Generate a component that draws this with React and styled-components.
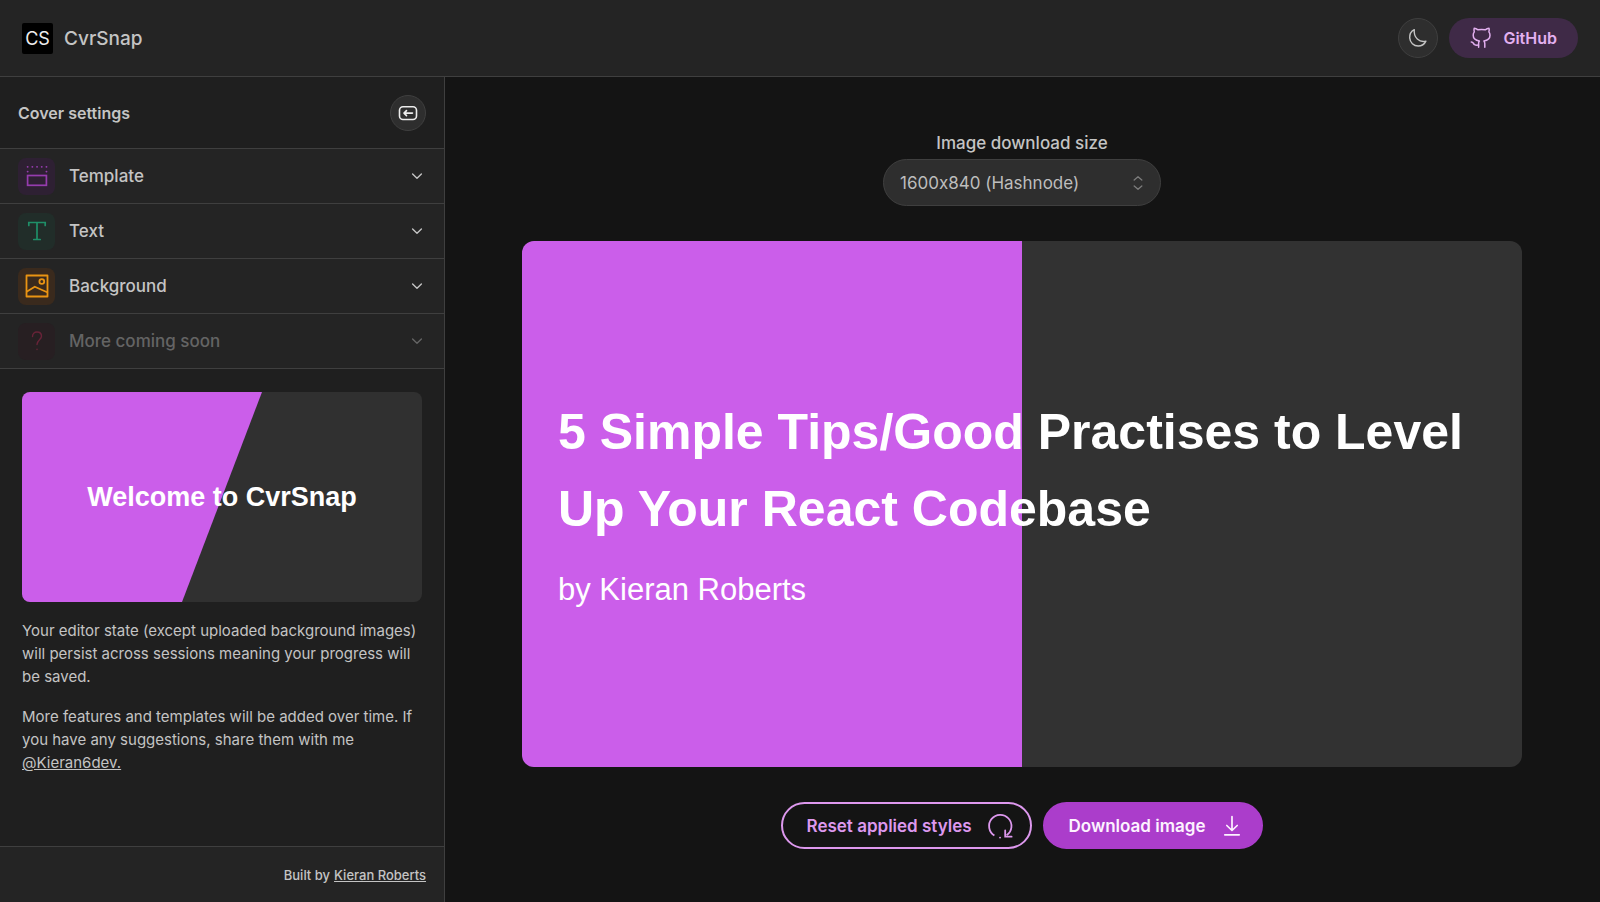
import React from "react";
import styled, { createGlobalStyle, ThemeProvider } from "styled-components";

const theme = {
  main: "#141414",
  side: "#1f1f1f",
  bar: "#242424",
  line: "#3f3f3f",
  text: "#c4c4c4",
  accent: "#cb5eea",
  accentSoft: "#dd98ee",
  accentStrong: "#ab3dcb",
};

const GlobalStyle = createGlobalStyle`
  *, *::before, *::after { box-sizing: border-box; }
  body {
    margin: 0;
    background: ${theme.main};
    color: ${theme.text};
    font-family: Inter, "Liberation Sans", sans-serif;
    font-size: 16px;
    font-feature-settings: "calt" 0;
  }
  h1, h2, p { margin: 0; }
  a { color: inherit; }
  button, select { font: inherit; font-feature-settings: inherit; cursor: pointer; }
  svg { display: block; flex: none; }
`;

const Page = styled.div`
  min-height: 100vh;
  display: flex;
  flex-direction: column;
`;

const Header = styled.header`
  height: 77px;
  padding: 0 22px;
  display: flex;
  align-items: center;
  justify-content: space-between;
  background: ${(p) => p.theme.bar};
  border-bottom: 1px solid ${(p) => p.theme.line};
`;

const Brand = styled.a`
  display: flex;
  align-items: center;
  gap: 11px;
  font-size: 19px;
  font-weight: 500;
  text-decoration: none;
`;

const Logo = styled.span`
  width: 31px;
  height: 31px;
  border-radius: 2px;
  background: #000;
  color: #eee;
  font-size: 18px;
  font-weight: 400;
  display: grid;
  place-items: center;
`;

const Actions = styled.div`
  display: flex;
  align-items: center;
  gap: 11px;
`;

const RoundButton = styled.button`
  width: ${(p) => p.$size}px;
  height: ${(p) => p.$size}px;
  padding: 0;
  border: 1px solid ${(p) => p.theme.line};
  border-radius: 50%;
  background: #2e2e2e;
  color: ${(p) => p.$color};
  display: grid;
  place-items: center;
`;

const GitHubLink = styled.a`
  height: 40px;
  padding: 0 21px;
  border-radius: 20px;
  background: #3f2a47;
  color: #e3b0f0;
  font-weight: 600;
  text-decoration: none;
  display: flex;
  align-items: center;
  gap: 9px;
`;

const Body = styled.div`
  flex: 1;
  display: flex;
`;

const Sidebar = styled.aside`
  width: 445px;
  flex: none;
  display: flex;
  flex-direction: column;
  background: ${(p) => p.theme.side};
  border-right: 1px solid ${(p) => p.theme.line};
`;

const SidebarHead = styled.div`
  height: 72px;
  padding: 0 18px;
  display: flex;
  align-items: center;
  justify-content: space-between;
  border-bottom: 1px solid ${(p) => p.theme.line};
`;

const SidebarTitle = styled.h2`
  font-size: 16px;
  font-weight: 600;
`;

const SectionButton = styled.button`
  width: 100%;
  height: 55px;
  padding: 0 20px 0 18px;
  border: 0;
  border-bottom: 1px solid ${(p) => p.theme.line};
  background: ${(p) => p.theme.bar};
  color: ${(p) => p.theme.text};
  font-size: 17px;
  font-weight: 500;
  text-align: left;
  display: flex;
  align-items: center;
  gap: 14px;

  &:disabled { cursor: default; color: #646464; }
`;

const SectionIcon = styled.span`
  width: 37px;
  height: 37px;
  border-radius: 8px;
  background: ${(p) => p.$bg};
  color: ${(p) => p.$color};
  display: grid;
  place-items: center;
`;

const SectionName = styled.span`
  flex: 1;
`;

const Intro = styled.div`
  flex: 1;
  padding: 23px 22px;
  display: flex;
  flex-direction: column;
  gap: 17px;
  font-size: 15px;
  line-height: 23px;
`;

const Welcome = styled.div`
  position: relative;
  isolation: isolate;
  aspect-ratio: 1600 / 840;
  border-radius: 8px;
  overflow: hidden;
  background: #303030;
  color: #fff;
  font-family: "Liberation Sans", Arial, sans-serif;
  font-size: 27px;
  font-weight: 700;
  display: grid;
  place-items: center;

  &::before {
    content: "";
    position: absolute;
    inset: 0;
    z-index: -1;
    background: ${(p) => p.theme.accent};
    clip-path: polygon(0 0, 60% 0, 40% 100%, 0 100%);
  }
`;

const SidebarFoot = styled.footer`
  height: 56px;
  padding: 0 18px;
  display: flex;
  align-items: center;
  justify-content: flex-end;
  gap: 4px;
  font-size: 13px;
  font-weight: 500;
  background: ${(p) => p.theme.bar};
  border-top: 1px solid ${(p) => p.theme.line};
`;

const Editor = styled.main`
  flex: 1;
  min-width: 0;
  padding: 55px 41px 40px 40px;
  display: flex;
  flex-direction: column;
  align-items: center;
  gap: 35px;
`;

const SizeField = styled.div`
  display: flex;
  flex-direction: column;
  align-items: center;
  gap: 4px;
`;

const SizeLabel = styled.label`
  font-size: 17px;
  font-weight: 500;
  line-height: 23px;
`;

const SelectBox = styled.div`
  width: 278px;
  display: grid;
  align-items: center;

  > * { grid-area: 1 / 1; }
  > svg { justify-self: end; margin-right: 16px; pointer-events: none; color: #7c7c7c; }
`;

const Select = styled.select`
  appearance: none;
  width: 100%;
  height: 47px;
  padding: 0 40px 0 16px;
  border: 1px solid #3f3f3f;
  border-radius: 24px;
  background: #2e2e2e;
  color: #bdbdbd;
  font-size: 17px;
`;

const Cover = styled.section`
  width: 100%;
  max-width: 1000px;
  aspect-ratio: 1000 / 526;
  padding: 0 36px;
  border-radius: 12px;
  background: linear-gradient(90deg, ${(p) => p.theme.accent} 50%, #323232 50%);
  color: #fff;
  font-family: "Liberation Sans", Arial, sans-serif;
  display: flex;
  flex-direction: column;
  justify-content: center;
  gap: 18px;
`;

const CoverTitle = styled.h1`
  font-size: 50px;
  line-height: 77px;
  font-weight: 700;
`;

const CoverAuthor = styled.p`
  font-size: 31px;
  line-height: 48px;
`;

const ButtonRow = styled.div`
  display: flex;
  gap: 11px;
`;

const PillButton = styled.button`
  height: 47px;
  padding: 0 17px 0 24px;
  border: 2px solid ${(p) => (p.$filled ? p.theme.accentStrong : p.theme.accentSoft)};
  border-radius: 24px;
  background: ${(p) => (p.$filled ? p.theme.accentStrong : "transparent")};
  color: ${(p) => (p.$filled ? "#fdf2ff" : p.theme.accentSoft)};
  font-size: 17px;
  font-weight: 600;
  display: flex;
  align-items: center;
  gap: 15px;
`;

function Icon({ size = 24, box = 24, width = 1, children }) {
  return (
    <svg
      width={size}
      height={size}
      viewBox={`0 0 ${box} ${box}`}
      fill="none"
      stroke="currentColor"
      strokeWidth={width}
      strokeLinecap="round"
      strokeLinejoin="round"
      aria-hidden="true"
    >
      {children}
    </svg>
  );
}

const MoonIcon = () => (
  <Icon width={1.4}>
    <path d="M8.3 3.7C5.2 5.3 3.5 8.4 3.7 11.9 4 16.5 7.7 20 12.2 20c3.4 0 6.3-1.9 7.700-4.900C13.500 16.700 7.300 11.700 8.300 3.700Z" />
  </Icon>
);

const GitHubIcon = () => (
  <Icon width={1.5}>
    <path d="M8.6 21.3V17.5c0-1.100.2-1.800.8-2.500C5.700 14.500 3.200 12.800 3.200 9.300c0-1.400.4-2.500 1.100-3.400C3.900 4.700 3.900 3.400 4.200 2.300c1.400.1 2.700.7 3.800 1.500 2.300-.5 4.900-.5 7.200 0 1.100-.8 2.400-1.400 3.800-1.500.3 1.100.3 2.400-.1 3.600.7.9 1.100 2 1.100 3.400 0 3.500-2.500 5.200-6.100 5.700.6.7.9 1.500.9 2.500v3.800" />
    <path d="M1.3 15.9c2.1 0 2.1 2.1 3.300 2.800 1.100.6 2.500.5 3.900.3" />
  </Icon>
);

const CollapseIcon = () => (
  <Icon size={20} box={20} width={1.6}>
    <rect x="1.5" y="3.7" width="17" height="12.8" rx="3.5" />
    <path d="M14.5 10.1H6M8.5 7.6 6 10.1l2.5 2.5" />
  </Icon>
);

const TemplateIcon = () => (
  <Icon width={1.7}>
    <rect x="2.6" y="11.5" width="18.8" height="9.8" strokeLinejoin="miter" />
    <path
      d="M2.6 2.8h.1M7.3 2.8h.1M12 2.8h.1M16.7 2.8h.1M21.4 2.8h.1M2.6 7.6h.1M21.4 7.6h.1"
      strokeWidth="1.8"
    />
  </Icon>
);

const TextIcon = () => (
  <Icon width={1.7}>
    <path d="M3.8 6.5V3.5h16.4v3M12 3.5v17M8.8 20.5h6.4" strokeLinejoin="miter" />
  </Icon>
);

const ImageIcon = () => (
  <Icon width={1.8}>
    <rect x="1.5" y="1.5" width="21" height="21" />
    <circle cx="16.8" cy="7.5" r="2.4" />
    <path d="M2 17.5l7.800-4.800 12.400 5.600" />
  </Icon>
);

const QuestionIcon = () => (
  <Icon width={1.4}>
    <path d="M7.5 7.5C7.5 4.8 9.4 3 12 3s4.500 1.700 4.500 4.200c0 3.300-4.500 3.800-4.500 8.300M12 20.300v.2" />
  </Icon>
);

const ChevronIcon = () => (
  <Icon size={14} box={14} width={1.4}>
    <path d="M2.6 5 7 9.2 11.4 5" />
  </Icon>
);

const UpDownIcon = () => (
  <Icon size={14} box={14} width={1.3}>
    <path d="M3.2 4 7 .7 10.8 4M3.2 10 7 13.3 10.8 10" />
  </Icon>
);

const ResetIcon = () => (
  <Icon size={26} box={26} width={1.8}>
    <path d="M7.4 22.6A11.2 11.2 0 1 1 19.6 22.3" strokeLinecap="butt" />
    <path d="M18.2 17.4v6.3h6.4" strokeLinejoin="miter" />
    <path d="M13 24.6h.1" />
  </Icon>
);

const DownloadIcon = () => (
  <Icon width={1.7}>
    <path d="M12 2.5v13.8M6.8 11.5l5.2 5 5.2-5M4.8 20.8h14.400" />
  </Icon>
);

const sections = [
  { name: "Template", icon: TemplateIcon, color: "#963cae", bg: "#2e2033" },
  { name: "Text", icon: TextIcon, color: "#1f8f68", bg: "#212d29" },
  { name: "Background", icon: ImageIcon, color: "#ea9413", bg: "#3a2a1d" },
  { name: "More coming soon", icon: QuestionIcon, color: "#682338", bg: "#271f22", disabled: true },
];

export default function App() {
  return (
    <ThemeProvider theme={theme}>
      <GlobalStyle />
      <Page>
        <Header>
          <Brand href="#">
            <Logo>CS</Logo>
            CvrSnap
          </Brand>
          <Actions>
            <RoundButton type="button" $size={40} $color="#c4c4c4" aria-label="Toggle theme">
              <MoonIcon />
            </RoundButton>
            <GitHubLink href="#">
              <GitHubIcon />
              GitHub
            </GitHubLink>
          </Actions>
        </Header>
        <Body>
          <Sidebar>
            <SidebarHead>
              <SidebarTitle>Cover settings</SidebarTitle>
              <RoundButton type="button" $size={36} $color="#ececec" aria-label="Collapse sidebar">
                <CollapseIcon />
              </RoundButton>
            </SidebarHead>
            {sections.map(({ name, icon: Glyph, color, bg, disabled }) => (
              <SectionButton key={name} type="button" disabled={disabled}>
                <SectionIcon $bg={bg} $color={color}>
                  <Glyph />
                </SectionIcon>
                <SectionName>{name}</SectionName>
                <ChevronIcon />
              </SectionButton>
            ))}
            <Intro>
              <Welcome>Welcome to CvrSnap</Welcome>
              <p>
                Your editor state (except uploaded background images) will persist across sessions
                meaning your progress will be saved.
              </p>
              <p>
                More features and templates will be added over time. If you have any suggestions,
                share them with me <a href="#">@Kieran6dev.</a>
              </p>
            </Intro>
            <SidebarFoot>
              Built by <a href="#">Kieran Roberts</a>
            </SidebarFoot>
          </Sidebar>
          <Editor>
            <SizeField>
              <SizeLabel htmlFor="size">Image download size</SizeLabel>
              <SelectBox>
                <Select id="size" defaultValue="hashnode">
                  <option value="hashnode">1600x840 (Hashnode)</option>
                </Select>
                <UpDownIcon />
              </SelectBox>
            </SizeField>
            <Cover>
              <CoverTitle>5 Simple Tips/Good Practises to Level Up Your React Codebase</CoverTitle>
              <CoverAuthor>by Kieran Roberts</CoverAuthor>
            </Cover>
            <ButtonRow>
              <PillButton type="button">
                Reset applied styles
                <ResetIcon />
              </PillButton>
              <PillButton type="button" $filled>
                Download image
                <DownloadIcon />
              </PillButton>
            </ButtonRow>
          </Editor>
        </Body>
      </Page>
    </ThemeProvider>
  );
}
